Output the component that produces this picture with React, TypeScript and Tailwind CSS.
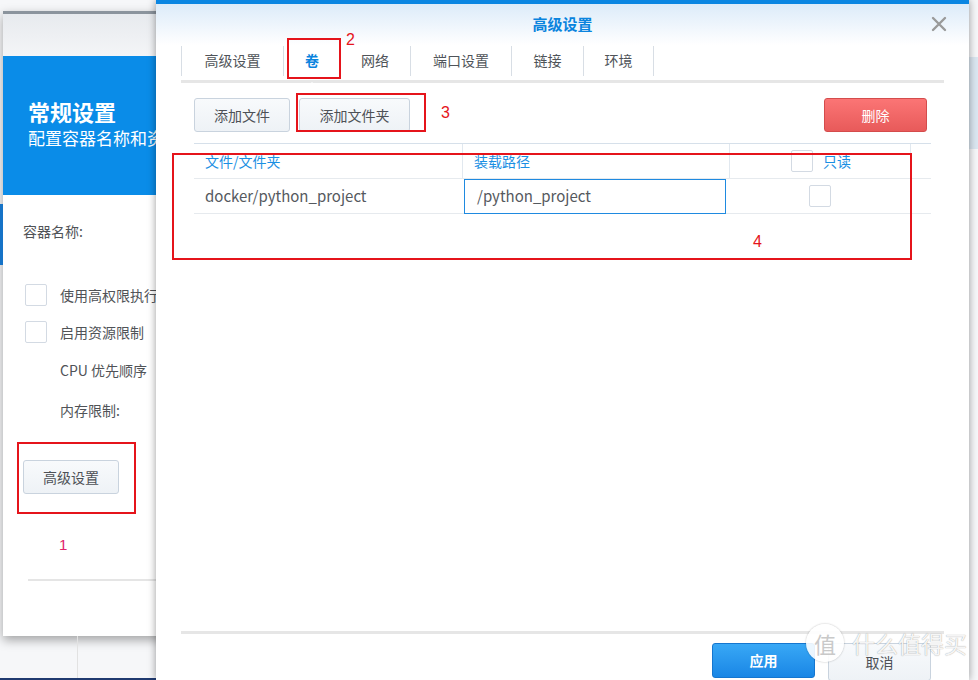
import React from 'react';

const Checkbox = ({ className = '' }: { className?: string }) => (
  <div className={`w-[22px] h-[22px] border border-[#d3dae3] rounded-[2px] bg-white ${className}`}></div>
);

const tabs = [
  { label: '高级设置', w: 'w-[102px]', sep: true },
  { label: '卷', w: 'w-[57px]', sep: true, active: true },
  { label: '网络', w: 'w-[70px]', sep: false },
  { label: '端口设置', w: 'w-[101px]', sep: true },
  { label: '链接', w: 'w-[72px]', sep: true },
  { label: '环境', w: 'w-[71px]', sep: true },
];

const App = () => {
  return (
    <div
      className="relative w-[978px] h-[680px] overflow-hidden bg-[#f6f7f9] text-[14px] text-[#505357]"
      style={{ fontFamily: '"Noto Sans CJK SC", "Noto Sans", sans-serif' }}
    >
      {/* window behind, on the right */}
      <div className="absolute left-[969px] top-[57px] w-[20px] h-[92px] bg-[#dbe7f1]"></div>

      {/* left window: 常规设置 */}
      <div className="absolute left-[3px] top-[11px] w-[220px] h-[625px] bg-white shadow-[0_4px_10px_rgba(0,0,0,0.35)] flex flex-col">
        <div className="h-[3px] bg-[#8b949d]"></div>
        <div className="h-[42px] bg-gradient-to-b from-[#e7eaee] to-[#f4f5f7]"></div>
        <div className="h-[139px] bg-[#0a8ce8] px-[25px] pt-[43px] text-white">
          <div className="text-[22px] font-bold leading-[25px]">常规设置</div>
          <div className="mt-[3px] text-[17px] leading-[22px] whitespace-nowrap">配置容器名称和资源</div>
        </div>
        <div className="relative flex-1 px-[20px]">
          <div className="absolute -left-[3px] top-[9px] w-[3px] h-[61px] bg-[#1673c7]"></div>
          <div className="mt-[26px] leading-[20px]">容器名称:</div>
          <div className="mt-[43px] flex items-center gap-[13px] pl-[2px]">
            <Checkbox />
            <span className="whitespace-nowrap">使用高权限执行容器</span>
          </div>
          <div className="mt-[15px] flex items-center gap-[13px] pl-[2px]">
            <Checkbox />
            <span>启用资源限制</span>
          </div>
          <div className="mt-[17px] pl-[37px] leading-[20px] whitespace-nowrap">CPU 优先顺序</div>
          <div className="mt-[20px] pl-[37px] leading-[20px]">内存限制:</div>
          <button className="mt-[40px] w-[96px] h-[34px] rounded-[3px] border border-[#c9d3de] bg-gradient-to-b from-[#f8fafc] to-[#eef2f6] text-[#4d5156]">
            高级设置
          </button>
          <div className="mt-[85px] ml-[5px] h-[2px] bg-[#e5e5e5]"></div>
        </div>
      </div>
      <div className="absolute left-[77px] top-[636px] w-[1px] h-[44px] bg-[#e2e2e2]"></div>
      <div className="absolute left-0 top-[678px] w-[156px] h-[2px] bg-[#203a70]"></div>

      {/* dialog: 高级设置 */}
      <div className="absolute left-[156px] top-0 w-[813px] h-[680px] bg-white border-t-[4px] border-[#0a86e2] shadow-[0_0_8px_rgba(0,0,0,0.4)] flex flex-col">
        <div className="relative h-[41px] bg-gradient-to-b from-[#dcebf9] to-white flex items-center justify-center">
          <span className="text-[15px] font-bold text-[#0a84de] -mt-[1px]">高级设置</span>
          <svg className="absolute right-[22px] top-[12px] w-[16px] h-[16px]" viewBox="0 0 16 16">
            <path d="M2 2 L14 14 M14 2 L2 14" stroke="#9a9a9a" strokeWidth="2.4" strokeLinecap="round" />
          </svg>
        </div>

        <div className="mx-[25px] flex h-[38px] border-b-[3px] border-[#e6e6e6]">
          {tabs.map((t, i) => (
            <div
              key={t.label}
              className={`relative ${t.w} h-[30px] mt-[1px] flex items-center justify-center ${t.sep ? 'border-l border-[#d8dee5]' : ''} ${i === tabs.length - 1 ? 'border-r' : ''} ${t.active ? 'text-[#0a84de] font-bold' : 'text-[#4f5459]'}`}
            >
              <span className="-mt-[1px]">{t.label}</span>
              {t.active && (
                <div className="absolute left-1/2 -translate-x-1/2 top-[36px] w-0 h-0 border-x-[6px] border-x-transparent border-b-[6px] border-b-white"></div>
              )}
            </div>
          ))}
        </div>

        <div className="flex-1 px-[38px]">
          <div className="mt-[15px] flex items-center">
            <button className="w-[96px] h-[34px] rounded-[3px] border border-[#c9d3de] bg-gradient-to-b from-[#f8fafc] to-[#eef2f6] text-[#4d5156]">
              添加文件
            </button>
            <button className="ml-[9px] w-[111px] h-[34px] rounded-[3px] border border-[#c9d3de] bg-gradient-to-b from-[#f8fafc] to-[#eef2f6] text-[#4d5156]">
              添加文件夹
            </button>
            <button className="ml-auto mr-[4px] w-[103px] h-[34px] rounded-[3px] border border-[#d44c4c] bg-gradient-to-b from-[#fb7575] to-[#e85a5a] text-white">
              删除
            </button>
          </div>

          <div className="mt-[11px] w-[737px] border-t border-[#d6e0ea]">
            <div className="flex h-[35px] border-b border-[#e6eaee] text-[#1a8fe3]">
              <div className="w-[268px] pl-[11px] flex items-center">文件/文件夹</div>
              <div className="w-[267px] pl-[11px] border-l border-[#e1e8ef] flex items-center">装载路径</div>
              <div className="w-[181px] border-l border-[#e1e8ef] flex items-center justify-center gap-[10px] pl-[2px]">
                <Checkbox />
                <span>只读</span>
              </div>
              <div className="flex-1 border-l border-[#e1e8ef]"></div>
            </div>
            <div className="flex h-[35px] border-b border-[#e6eaee] items-center">
              <div className="w-[270px] pl-[11px] text-[15px] text-[#55595e]">docker/python_project</div>
              <div className="w-[262px] h-[35px] border border-[#1f8ae0] px-[12px] flex items-center text-[15px] text-[#55595e]">
                /python_project
              </div>
              <div className="w-[186px] flex justify-center pl-[2px]">
                <Checkbox />
              </div>
            </div>
          </div>
        </div>

        <div className="mx-[25px] border-t-[3px] border-[#e6e6e6]"></div>
        <div className="h-[46px] flex items-start justify-end pr-[38px] pt-[9px] gap-[13px]">
          <button className="w-[103px] h-[35px] rounded-[3px] border border-[#1576cf] bg-gradient-to-b from-[#38a8f6] to-[#1986e5] text-white font-bold">
            应用
          </button>
          <button className="w-[103px] h-[38px] rounded-[3px] border border-[#c9d3de] bg-gradient-to-b from-[#f8fafc] to-[#eef2f6] text-[#4d5156]">
            取消
          </button>
        </div>
      </div>

      {/* annotations */}
      <div className="absolute left-[17px] top-[442px] w-[119px] h-[72px] border-2 border-[#e5141b] pointer-events-none"></div>
      <div className="absolute left-[59px] top-[534px] text-[15px] text-[#e0246a]" style={{ fontFamily: '"Liberation Sans", sans-serif' }}>1</div>
      <div className="absolute left-[287px] top-[38px] w-[54px] h-[41px] border-2 border-[#e5141b] pointer-events-none"></div>
      <div className="absolute left-[346px] top-[28px] text-[16px] text-[#e5141b]" style={{ fontFamily: '"Liberation Sans", sans-serif' }}>2</div>
      <div className="absolute left-[296px] top-[93px] w-[130px] h-[39px] border-2 border-[#e5141b] pointer-events-none"></div>
      <div className="absolute left-[441px] top-[101px] text-[16px] text-[#e5141b]" style={{ fontFamily: '"Liberation Sans", sans-serif' }}>3</div>
      <div className="absolute left-[172px] top-[153px] w-[740px] h-[107px] border-2 border-[#e5141b] pointer-events-none"></div>
      <div className="absolute left-[753px] top-[230px] text-[16px] text-[#e5141b]" style={{ fontFamily: '"Liberation Sans", sans-serif' }}>4</div>

      {/* watermark */}
      <div className="absolute left-[806px] top-[624px] flex items-center gap-[8px] pointer-events-none">
        <div className="w-[38px] h-[38px] rounded-full bg-white/90 flex items-center justify-center text-[22px] text-[#c9c9c9] shadow-[0_0_2px_rgba(0,0,0,0.3)]">值</div>
        <span className="text-[23px] tracking-[0px] text-white/90 [text-shadow:0_0_1px_rgba(0,0,0,0.45)]">什么值得买</span>
      </div>
    </div>
  );
};

export default App;
